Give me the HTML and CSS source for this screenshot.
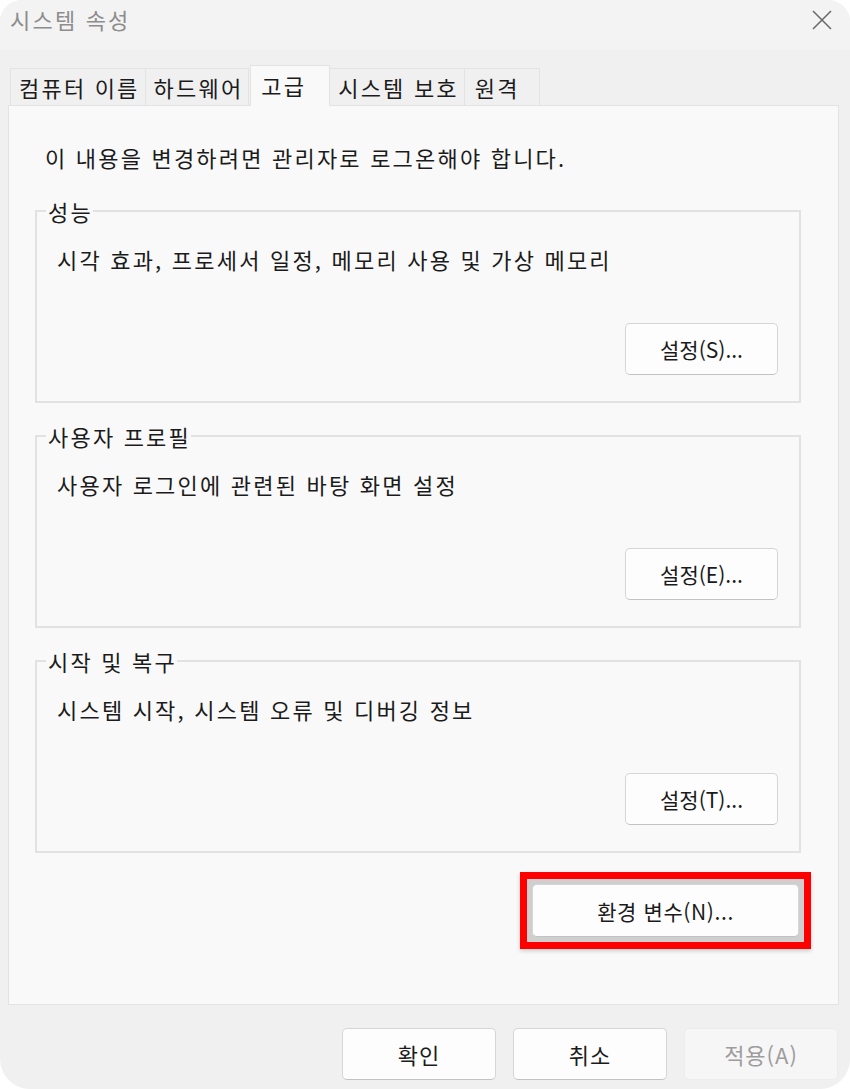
FILE: index.html
```html
<!DOCTYPE html>
<html lang="ko">
<head>
<meta charset="utf-8">
<title>시스템 속성</title>
<link rel="stylesheet" href="styles.css">
</head>
<body>
<div class="window">
  <div class="titlebar">
    <span class="title">시스템 속성</span>
    <svg class="close" width="22" height="22" viewBox="0 0 22 22"><path d="M2 2 L20 20 M20 2 L2 20" stroke="#6b6b6b" stroke-width="1.6" fill="none"/></svg>
  </div>
  <div class="tabs">
    <div class="tab">컴퓨터 이름</div>
    <div class="tab">하드웨어</div>
    <div class="tab active">고급</div>
    <div class="tab">시스템 보호</div>
    <div class="tab last">원격</div>
  </div>
  <div class="panel">
    <p class="notice">이 내용을 변경하려면 관리자로 로그온해야 합니다.</p>
    <fieldset class="group">
      <legend>성능</legend>
      <p class="desc">시각 효과, 프로세서 일정, 메모리 사용 및 가상 메모리</p>
      <div class="group-actions"><button class="btn">설정(S)...</button></div>
    </fieldset>
    <fieldset class="group">
      <legend>사용자 프로필</legend>
      <p class="desc">사용자 로그인에 관련된 바탕 화면 설정</p>
      <div class="group-actions"><button class="btn">설정(E)...</button></div>
    </fieldset>
    <fieldset class="group">
      <legend>시작 및 복구</legend>
      <p class="desc">시스템 시작, 시스템 오류 및 디버깅 정보</p>
      <div class="group-actions"><button class="btn">설정(T)...</button></div>
    </fieldset>
    <div class="env-row">
      <div class="highlight"><button class="btn env">환경 변수(N)...</button></div>
    </div>
  </div>
  <div class="footer">
    <button class="btn foot">확인</button>
    <button class="btn foot">취소</button>
    <button class="btn foot disabled">적용(A)</button>
  </div>
</div>
</body>
</html>
```
FILE: styles.css
```css
html, body {
  margin: 0;
  padding: 0;
  background: #ffffff;
}
body {
  font-family: "Noto Sans CJK KR", "Noto Sans", sans-serif;
  color: #1b1b1b;
}
.window {
  width: 850px;
  height: 1089px;
  background: #f0f0f0;
  border-radius: 22px 22px 30px 30px;
  overflow: hidden;
  display: flex;
  flex-direction: column;
}
.titlebar {
  height: 50px;
  flex: none;
  background: #f3f3f3;
  display: flex;
  justify-content: space-between;
  align-items: flex-start;
}
.title {
  font-size: 22px;
  letter-spacing: 2.2px;
  line-height: 30px;
  color: #8d8d8d;
  margin: 4px 0 0 10px;
}
.close {
  margin: 9px 17px 0 0;
}
.tabs {
  display: flex;
  align-items: flex-end;
  height: 40px;
  margin: 15px 0 0 10px;
  position: relative;
  z-index: 1;
}
.tab {
  box-sizing: border-box;
  height: 37px;
  padding: 0 5px 0 8px;
  border: 1px solid #e3e3e3;
  border-bottom: none;
  background: #f0f0f0;
  font-size: 22px;
  letter-spacing: 2.2px;
  line-height: 36px;
  color: #1b1b1b;
  margin-right: -1px;
}
.tab.active {
  height: 41px;
  margin-bottom: -1px;
  margin-left: 2px;
  background: #f9f9f9;
  padding: 0 23px 0 10px;
  line-height: 38px;
}
.tab.last {
  padding: 0 19px 0 10px;
}
.panel {
  flex: none;
  box-sizing: border-box;
  height: 900px;
  margin: 0 11px 0 8px;
  background: #f9f9f9;
  border: 1px solid #e3e3e3;
  display: flex;
  flex-direction: column;
}
.notice {
  margin: 36px 0 0 36px;
  font-size: 22px;
  letter-spacing: 2.2px;
  line-height: 30px;
}
.group {
  margin: 20px 0 0 26px;
  width: 766px;
  box-sizing: border-box;
  padding: 0 21px 26px 20px;
  border: 2px solid #e2e2e2;
  min-width: 0;
}
.group:first-of-type {
  margin-top: 26px;
}
.group legend {
  font-size: 22px;
  letter-spacing: 2.2px;
  line-height: 26px;
  padding: 0 0 0 2px;
  margin-left: -11px;
}
.desc {
  margin: 20px 0 0 0;
  font-size: 22px;
  letter-spacing: 2.2px;
  line-height: 30px;
}
.group-actions {
  display: flex;
  justify-content: flex-end;
  margin-top: 49px;
}
.btn {
  box-sizing: border-box;
  width: 153px;
  height: 52px;
  background: #fdfdfd;
  border: 1px solid #d6d6d6;
  border-bottom-color: #c2c2c2;
  border-radius: 5px;
  font-family: "Noto Sans CJK KR", "Noto Sans", sans-serif;
  font-size: 21px;
  color: #1b1b1b;
  padding: 0;
}
.env-row {
  display: flex;
  justify-content: flex-end;
  margin: 19px 27px 0 0;
}
.highlight {
  border: 7px solid #ff0000;
  padding: 5px;
  background: #cfcfcf;
  box-shadow: 0 2px 4px rgba(0,0,0,0.18);
}
.btn.env {
  display: block;
  width: 267px;
  height: 53px;
  letter-spacing: 0.6px;
}
.footer {
  display: flex;
  justify-content: flex-end;
  gap: 17px;
  margin: 23px 12px 0 0;
}
.btn.foot {
  width: 154px;
  font-size: 22px;
  letter-spacing: 1px;
}
.btn.disabled {
  background: #f6f6f6;
  border-color: #ececec;
  color: #9d9d9d;
}
```
